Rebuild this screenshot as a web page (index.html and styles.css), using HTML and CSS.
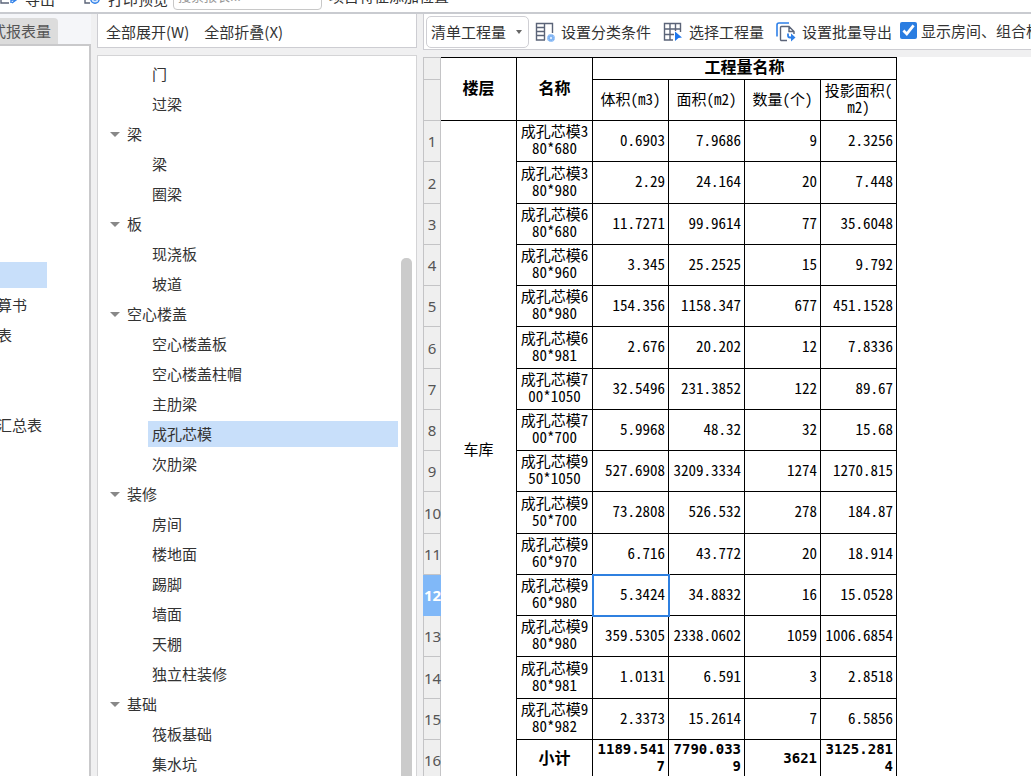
FILE: index.html
```html
<!DOCTYPE html>
<html lang="zh-CN">
<head>
<meta charset="utf-8">
<title>报表</title>
<link rel="stylesheet" href="styles.css">
</head>
<body>
<div class="app">
  <header class="ribbon">
    <div class="ribbon-row">
      <button class="ribbon-btn" type="button">
        <svg width="18" height="16" viewBox="0 0 18 16" fill="none"><path d="M8 1H1v13h8" stroke="#5b6478" stroke-width="1.4"/><path d="M11 14v-3h4M12 8l4 3-4 3" stroke="#2f80e8" stroke-width="1.4"/></svg>
        <span>导出</span>
      </button>
      <button class="ribbon-btn preview" type="button">
        <svg width="18" height="16" viewBox="0 0 18 16" fill="none"><path d="M7 14H2V1h10v5" stroke="#5b6478" stroke-width="1.4"/><circle cx="12" cy="10" r="4.200" fill="#d7e7fc" stroke="#2f80e8" stroke-width="1.400"/><circle cx="12" cy="10" r="1.800" fill="#2f80e8"/></svg>
        <span>打印预览</span>
      </button>
      <input class="search" type="text" aria-label="搜索报表" placeholder="搜索报表...">
      <span class="ribbon-label">项目特征添加位置</span>
    </div>
  </header>
  <div class="workspace">
    <aside class="side">
      <div class="tabs"><button class="tab" type="button">式报表量</button></div>
      <ul class="report-list">
        <li class="selected"></li>
        <li>算书</li>
        <li>表</li>
        <li></li>
        <li></li>
        <li>汇总表</li>
      </ul>
    </aside>
    <section class="tree-pane">
      <div class="tree-tools">
        <button type="button">全部展开(W)</button>
        <button type="button">全部折叠(X)</button>
      </div>
      <div class="tree-box">
        <ul class="tree">
          <li>门</li>
          <li>过梁</li>
          <li class="group">梁</li>
          <li>梁</li>
          <li>圈梁</li>
          <li class="group">板</li>
          <li>现浇板</li>
          <li>坡道</li>
          <li class="group">空心楼盖</li>
          <li>空心楼盖板</li>
          <li>空心楼盖柱帽</li>
          <li>主肋梁</li>
          <li class="selected">成孔芯模</li>
          <li>次肋梁</li>
          <li class="group">装修</li>
          <li>房间</li>
          <li>楼地面</li>
          <li>踢脚</li>
          <li>墙面</li>
          <li>天棚</li>
          <li>独立柱装修</li>
          <li class="group">基础</li>
          <li>筏板基础</li>
          <li>集水坑</li>
        </ul>
        <div class="scrollbar"><div class="thumb"></div></div>
      </div>
    </section>
    <main class="report">
      <div class="toolbar">
        <div class="kind">
          <select aria-label="工程量类型"><option>清单工程量</option></select>
        </div>
        <button class="tool" type="button">
          <svg width="20" height="20" viewBox="0 0 20 20" fill="none"><path d="M10 18H1.500V1.500h16V11M9.500 1.500V18M1.500 5.500h8M1.500 9.500h8M1.500 13.500h8" stroke="#5b6478" stroke-width="1.400"/><circle cx="16" cy="16" r="3.800" fill="#7db2f3"/><circle cx="16" cy="16" r="3.400" stroke="#a9cdf8" stroke-width="1.200" stroke-dasharray="1.200 1.400"/><circle cx="16" cy="16" r="1.200" fill="#dcebfd"/></svg>
          <span>设置分类条件</span>
        </button>
        <button class="tool" type="button">
          <svg width="20" height="20" viewBox="0 0 20 20" fill="none"><path d="M10 18H1.500V1.500h16V10M7 1.500V18M12.500 1.500V9M1.500 7h16M1.500 12.500H11" stroke="#5b6478" stroke-width="1.400"/><path d="M12 9.500l7 6-3.500.500-3.500 3z" fill="#1f78ee"/></svg>
          <span>选择工程量</span>
        </button>
        <button class="tool last" type="button">
          <svg width="20" height="20" viewBox="0 0 20 20" fill="none"><path d="M1 14.500V3a2 2 0 0 1 2-2h10" stroke="#2f80e8" stroke-width="1.600"/><path d="M11 18.500H5.500a1 1 0 0 1-1-1v-12a1 1 0 0 1 1-1H13l5 5V12M13 4.500v5h5" stroke="#5b6478" stroke-width="1.400"/><path d="M12 11.500v2a2 2 0 0 0 2 2h2" stroke="#2f80e8" stroke-width="1.800"/><path d="M15 11.500l4.500 4-4.500 4z" fill="#2f80e8"/></svg>
          <span>设置批量导出</span>
        </button>
        <label class="check"><input type="checkbox" checked><span>显示房间、组合构件</span></label>
      </div>
      <div class="sheet">
        <table class="grid">
          <colgroup><col class="c-num"><col><col><col><col><col><col></colgroup>
          <thead>
            <tr class="h1"><th class="num"></th><th rowspan="2">楼层</th><th rowspan="2">名称</th><th colspan="4">工程量名称</th></tr>
            <tr class="h2"><th class="num"></th><th class="sub">体积(m3)</th><th class="sub">面积(m2)</th><th class="sub">数量(个)</th><th class="sub">投影面积(<br>m2)</th></tr>
          </thead>
          <tbody>
            <tr><th class="num" scope="row">1</th><td class="floor" rowspan="16">车库</td><td class="name">成孔芯模3<br>80*680</td><td>0.6903</td><td>7.9686</td><td>9</td><td>2.3256</td></tr>
            <tr><th class="num" scope="row">2</th><td class="name">成孔芯模3<br>80*980</td><td>2.29</td><td>24.164</td><td>20</td><td>7.448</td></tr>
            <tr><th class="num" scope="row">3</th><td class="name">成孔芯模6<br>80*680</td><td>11.7271</td><td>99.9614</td><td>77</td><td>35.6048</td></tr>
            <tr><th class="num" scope="row">4</th><td class="name">成孔芯模6<br>80*960</td><td>3.345</td><td>25.2525</td><td>15</td><td>9.792</td></tr>
            <tr><th class="num" scope="row">5</th><td class="name">成孔芯模6<br>80*980</td><td>154.356</td><td>1158.347</td><td>677</td><td>451.1528</td></tr>
            <tr><th class="num" scope="row">6</th><td class="name">成孔芯模6<br>80*981</td><td>2.676</td><td>20.202</td><td>12</td><td>7.8336</td></tr>
            <tr><th class="num" scope="row">7</th><td class="name">成孔芯模7<br>00*1050</td><td>32.5496</td><td>231.3852</td><td>122</td><td>89.67</td></tr>
            <tr><th class="num" scope="row">8</th><td class="name">成孔芯模7<br>00*700</td><td>5.9968</td><td>48.32</td><td>32</td><td>15.68</td></tr>
            <tr><th class="num" scope="row">9</th><td class="name">成孔芯模9<br>50*1050</td><td>527.6908</td><td>3209.3334</td><td>1274</td><td>1270.815</td></tr>
            <tr><th class="num" scope="row">10</th><td class="name">成孔芯模9<br>50*700</td><td>73.2808</td><td>526.532</td><td>278</td><td>184.87</td></tr>
            <tr><th class="num" scope="row">11</th><td class="name">成孔芯模9<br>60*970</td><td>6.716</td><td>43.772</td><td>20</td><td>18.914</td></tr>
            <tr><th class="num current" scope="row">12</th><td class="name">成孔芯模9<br>60*980</td><td class="active">5.3424</td><td>34.8832</td><td>16</td><td>15.0528</td></tr>
            <tr><th class="num" scope="row">13</th><td class="name">成孔芯模9<br>80*980</td><td>359.5305</td><td>2338.0602</td><td>1059</td><td>1006.6854</td></tr>
            <tr><th class="num" scope="row">14</th><td class="name">成孔芯模9<br>80*981</td><td>1.0131</td><td>6.591</td><td>3</td><td>2.8518</td></tr>
            <tr><th class="num" scope="row">15</th><td class="name">成孔芯模9<br>80*982</td><td>2.3373</td><td>15.2614</td><td>7</td><td>6.5856</td></tr>
            <tr class="total"><th class="num" scope="row">16</th><td class="name">小计</td><td>1189.541<br>7</td><td>7790.033<br>9</td><td>3621</td><td>3125.281<br>4</td></tr>
          </tbody>
        </table>
      </div>
    </main>
  </div>
</div>
</body>
</html>
```

FILE: styles.css
```css
* { box-sizing: border-box; }
html, body { height: 100%; }
body {
  margin: 0;
  overflow: hidden;
  background: #f0f0f1;
  color: #333;
  font: 15px/20px "Noto Sans CJK SC", sans-serif;
}
button {
  padding: 0;
  border: 0;
  background: none;
  color: inherit;
  font: inherit;
  white-space: nowrap;
}
ul { margin: 0; padding: 0; list-style: none; }
svg { flex: none; }

.app { display: flex; flex-direction: column; height: 100vh; overflow: hidden; }

.ribbon {
  display: flex;
  flex: none;
  align-items: flex-end;
  height: 14px;
  overflow: hidden;
  background: #fff;
  border-bottom: 2px solid #c9cbd0;
}
.ribbon-row { display: flex; align-items: flex-end; }
.ribbon-btn { display: flex; align-items: center; gap: 7px; height: 26px; }
.ribbon-btn.preview { margin-left: 28px; }
.ribbon-btn svg { margin-bottom: 4px; }
.search {
  width: 149px;
  height: 28px;
  margin: 0 0 2px 5px;
  padding: 0 4px 2px;
  border: 1px solid #c8c8c8;
  border-radius: 4px;
  font: 13px/20px "Noto Sans CJK SC", sans-serif;
}
.search::placeholder { color: #999; }
.ribbon-label { height: 26px; margin-left: 7px; white-space: nowrap; }

.workspace { display: flex; flex: 1; min-height: 0; }

.side { display: flex; flex: none; flex-direction: column; width: 91px; background: #f5f6f9; }
.tabs { display: flex; flex: none; align-items: flex-end; height: 30px; overflow: hidden; }
.tab {
  height: 26px;
  margin-left: -9px;
  padding: 0 7px 0 0;
  background: #dcdcdc;
  border-radius: 0 4px 0 0;
  color: #555;
}
.report-list {
  flex: 1;
  overflow: hidden;
  padding-top: 216px;
  background: #fff;
  border: solid #c9c9cb;
  border-width: 2px 2px 0 0;
}
.report-list li { height: 26px; margin: 0 0 4px -3px; line-height: 26px; white-space: nowrap; }
.report-list .selected { width: 50px; background: #c8dffa; }

.tree-pane { display: flex; flex: none; flex-direction: column; width: 320px; margin-left: 6px; }
.tree-tools {
  display: flex;
  flex: none;
  align-items: center;
  gap: 15px;
  height: 34px;
  padding: 2px 0 0 8px;
  background: #fff;
  border: 1px solid #cdcdd2;
  border-top: 0;
}
.tree-box {
  display: flex;
  flex: 1;
  min-height: 0;
  margin-top: 7px;
  background: #fff;
  border: 1px solid #d4d4d6;
  border-bottom: 0;
}
.tree { flex: 1; overflow: hidden; padding: 5px 3px 0 50px; }
.tree li { height: 26px; margin-bottom: 4px; padding-left: 4px; line-height: 26px; }
.tree .group { display: flex; align-items: center; gap: 7px; margin-left: -38px; padding-left: 0; }
.tree .group::before {
  border: 5px solid transparent;
  border-top-color: #888;
  border-bottom: 0;
  content: "";
}
.tree .selected { background: #c8dffa; }
.scrollbar { width: 15px; padding: 202px 4px 0 0; }
.thumb { height: 100%; background: #cbcbcb; border-radius: 5px 5px 0 0; }

.report { display: flex; flex: 1; flex-direction: column; min-width: 0; margin-left: 6px; }
.toolbar {
  display: flex;
  flex: none;
  align-items: center;
  height: 36px;
  overflow: hidden;
  padding-left: 2px;
  background: #fff;
  border: 1px solid #cdcdd2;
  border-width: 0 0 1px 1px;
}
.kind {
  display: flex;
  flex: none;
  align-items: center;
  width: 103px;
  height: 32px;
  margin-right: 6px;
  padding-right: 6px;
  background: #fff;
  border: 1px solid #cfcfd4;
  border-radius: 5px;
}
.kind select {
  flex: 1;
  min-width: 0;
  height: 100%;
  padding: 0 0 0 4px;
  appearance: none;
  background: none;
  border: 0;
  color: inherit;
  font: inherit;
}
.kind::after {
  border: 3px solid transparent;
  border-top: 4px solid #666;
  border-bottom: 0;
  content: "";
}
.tool { display: flex; flex: none; align-items: center; gap: 6px; margin-right: 12px; padding-top: 1px; }
.tool.last { margin-right: 8px; }
.check { display: flex; flex: none; align-items: center; gap: 4px; padding-bottom: 2px; white-space: nowrap; }
.check input {
  width: 17px;
  height: 17px;
  margin: 0;
  accent-color: #2a7de1;
}

.sheet { flex: 1; overflow: hidden; margin-top: 7px; background: #fff; }
.grid {
  width: 474px;
  table-layout: fixed;
  border-spacing: 0;
  color: #000;
  font-family: "Noto Sans Mono CJK SC", "Noto Sans CJK SC", monospace;
  font-feature-settings: "hwid";
  line-height: 17px;
}
.c-num { width: 18px; }
.grid th, .grid td {
  padding: 0 3px 4px;
  border: solid #000;
  border-width: 0 1px 1px 0;
  white-space: nowrap;
}
.grid thead th { font-size: 16px; }
.grid td { text-align: right; }
.grid .h1 th { border-top-width: 1px; }
.grid .h1 { height: 23px; }
.grid .h2 { height: 41px; }
.grid tbody tr { height: 41px; }
.grid tbody tr:nth-child(4n+2) { height: 42px; }
.grid thead .sub { font-size: 15px; font-weight: 400; }
.grid .name, .grid .floor { text-align: center; }
.grid th.num {
  padding: 0;
  background: #efefef;
  border-color: #c4c4c6;
  border-left-width: 1px;
  color: #555;
  font: 15px/20px "Noto Sans", sans-serif;
  font-feature-settings: normal;
}
.grid th.current { background: #80b8f8; border-color: #80b8f8; color: #fff; font-weight: 700; }
.grid .active { outline: 2px solid #2f80e0; outline-offset: -1px; }
.grid .total td { font-family: "DejaVu Sans Mono", "Noto Sans CJK SC", monospace; font-size: 14px; font-weight: 700; }
.grid .total .name { font-size: 16px; }
```
